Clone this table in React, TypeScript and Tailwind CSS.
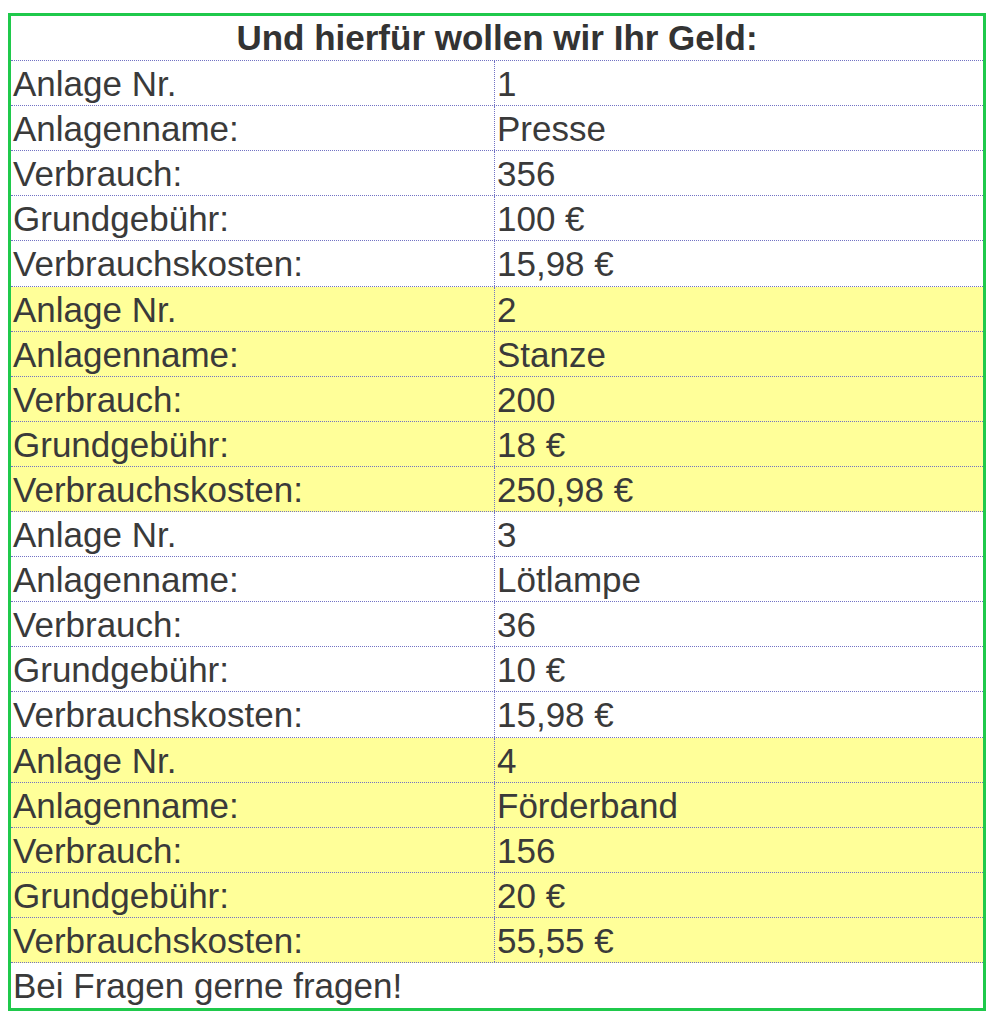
import React from "react";

const groups = [
  { nr: "1", name: "Presse", verbrauch: "356", grund: "100 €", kosten: "15,98 €", yellow: false },
  { nr: "2", name: "Stanze", verbrauch: "200", grund: "18 €", kosten: "250,98 €", yellow: true },
  { nr: "3", name: "Lötlampe", verbrauch: "36", grund: "10 €", kosten: "15,98 €", yellow: false },
  { nr: "4", name: "Förderband", verbrauch: "156", grund: "20 €", kosten: "55,55 €", yellow: true },
];

function Row({ label, value, yellow }: { label: string; value: string; yellow: boolean }) {
  return (
    <div
      className={`grid grid-cols-[484px_1fr] h-[45.1px] border-b border-dotted border-[#7272c4] ${
        yellow ? "bg-[#ffff99]" : "bg-white"
      }`}
    >
      <div className="pl-[2px] pt-[3px] border-r border-dotted border-[#7272c4] leading-[1.149] whitespace-nowrap">
        {label}
      </div>
      <div className="pl-[2px] pt-[3px] leading-[1.149] whitespace-nowrap">{value}</div>
    </div>
  );
}

export default function App() {
  return (
    <div className="bg-white w-[993px] h-[1022px] pt-[13px] pl-[8px]">
      <div
        className="w-[978px] border-[3px] border-[#1fc94b] bg-white text-[35px] text-[#3a3a3a]"
        style={{ fontFamily: '"Liberation Sans", Arial, sans-serif' }}
      >
        <div className="h-[45.1px] border-b border-dotted border-[#7272c4] text-center font-bold text-[#333] pt-[2px] leading-[1.149]">
          Und hierfür wollen wir Ihr Geld:
        </div>
        {groups.map((g) => (
          <React.Fragment key={g.nr}>
            <Row label="Anlage Nr." value={g.nr} yellow={g.yellow} />
            <Row label="Anlagenname:" value={g.name} yellow={g.yellow} />
            <Row label="Verbrauch:" value={g.verbrauch} yellow={g.yellow} />
            <Row label="Grundgebühr:" value={g.grund} yellow={g.yellow} />
            <Row label="Verbrauchskosten:" value={g.kosten} yellow={g.yellow} />
          </React.Fragment>
        ))}
        <div className="h-[45.1px] pl-[2px] pt-[3px] leading-[1.149] whitespace-nowrap">
          Bei Fragen gerne fragen!
        </div>
      </div>
    </div>
  );
}
